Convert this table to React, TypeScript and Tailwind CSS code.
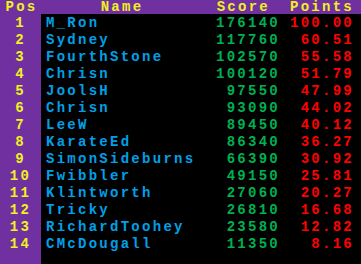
import React from 'react';

const rows = [
  { name: "M_Ron", score: 176140, points: "100.00" },
  { name: "Sydney", score: 117760, points: "60.51" },
  { name: "FourthStone", score: 102570, points: "55.58" },
  { name: "Chrisn", score: 100120, points: "51.79" },
  { name: "JoolsH", score: 97550, points: "47.99" },
  { name: "Chrisn", score: 93090, points: "44.02" },
  { name: "LeeW", score: 89450, points: "40.12" },
  { name: "KarateEd", score: 86340, points: "36.27" },
  { name: "SimonSideburns", score: 66390, points: "30.92" },
  { name: "Fwibbler", score: 49150, points: "25.81" },
  { name: "Klintworth", score: 27060, points: "20.27" },
  { name: "Tricky", score: 26810, points: "16.68" },
  { name: "RichardToohey", score: 23580, points: "12.82" },
  { name: "CMcDougall", score: 11350, points: "8.16" },
];

const App: React.FC = () => {
  return (
    <div
      className="w-[361px] h-[264px] overflow-hidden bg-[#7030a0] flex flex-col text-[14px] font-bold tracking-[2.27px]"
      style={{ fontFamily: '"Liberation Mono", "DejaVu Sans Mono", monospace' }}
    >
      {/* Header */}
      <div className="grid grid-cols-[41px_159px_80px_74px] h-[14px] pt-[1px] leading-[13px] text-[#f0f020] whitespace-nowrap">
        <div className="text-center pl-[2px]">Pos</div>
        <div className="text-center pl-[3px]">Name</div>
        <div className="text-right pr-[10px]">Score</div>
        <div className="text-right">Points</div>
      </div>

      {/* Body */}
      <div className="flex flex-1">
        <div className="w-[41px] pt-[1px] text-[#f0f020]">
          {rows.map((_, i) => (
            <div key={i} className="h-[17px] leading-[17px] text-center">
              {i + 1}
            </div>
          ))}
        </div>
        <div className="flex-1 bg-black pt-[1px]">
          {rows.map((r, i) => (
            <div
              key={i}
              className="grid grid-cols-[159px_80px_74px] h-[17px] leading-[17px] whitespace-nowrap"
            >
              <div className="pl-[5px] text-[#00a0e8]">{r.name}</div>
              <div className="text-right text-[#00b050]">{r.score}</div>
              <div className="text-right text-[#ff0000]">{r.points}</div>
            </div>
          ))}
        </div>
      </div>
    </div>
  );
};

export default App;
